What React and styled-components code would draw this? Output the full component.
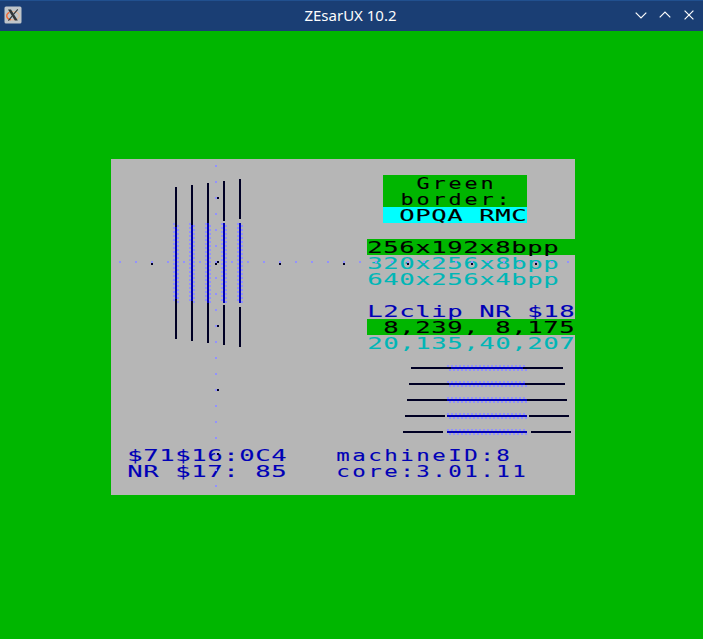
import React from "react";
import styled, { createGlobalStyle } from "styled-components";

const GlobalStyle = createGlobalStyle`
  html, body { margin: 0; padding: 0; background: #00b600; overflow: hidden; }
`;

const Window = styled.div`
  display: flex;
  flex-direction: column;
  width: 703px;
  height: 639px;
  background: #00b600;
`;

const TitleBar = styled.header`
  box-sizing: border-box;
  display: grid;
  grid-template-columns: 69px 1fr 71px;
  align-items: center;
  height: 31px;
  flex: none;
  background: #1a3e74;
  border-top: 1px solid #21508f;
`;

const AppIcon = styled.svg`
  display: block;
  margin: -2px 0 0 4px;
`;

const Title = styled.h1`
  margin: -2px 0 0;
  text-align: center;
  font: 400 15px/20px "Noto Sans", sans-serif;
  color: #fcfcfc;
`;

const Controls = styled.div`
  display: flex;
  justify-content: flex-end;
  gap: 8px;
  margin-top: -2px;
  padding-right: 6px;
`;

const ControlButton = styled.button`
  display: flex;
  padding: 0;
  border: 0;
  background: none;
`;

const Border = styled.main`
  flex: 1;
  padding: 128px 128px 0 111px;
`;

const Screen = styled.div`
  position: relative;
  display: grid;
  grid-template-columns: repeat(29, 16px);
  grid-template-rows: repeat(21, 16px);
  width: 464px;
  height: 336px;
  background: #b6b6b6;
`;

const Cells = styled.div`
  grid-column: ${(p) => p.$col + 1} / span ${(p) => p.$span};
  grid-row: ${(p) => p.$row + 1};
  height: 16px;
  background: ${(p) => p.$paper || "transparent"};
  color: ${(p) => p.$ink};
`;

/* Each glyph is stretched by $stretch, and spacing keeps the 16px character pitch. */
const Glyphs = styled.span`
  display: block;
  width: max-content;
  white-space: pre;
  font: 400 16px/16px "DejaVu Sans Mono", monospace;
  letter-spacing: ${(p) => 16 / p.$stretch - 9.633}px;
  text-indent: ${(p) => (16 / p.$stretch - 9.633) / 2}px;
  -webkit-text-stroke: 0.1px currentColor;
  transform: translateY(1px) scaleX(${(p) => p.$stretch});
  transform-origin: 0 0;
`;

const Plot = styled.svg`
  position: absolute;
  inset: 0;
`;

const GREEN = "#00b600";
const BLUE = "#0000b6";
const TEAL = "#00b6b6";
const NAVY = "#000024";
const LILAC = "#9292ff";

const LINES = [
  { row: 1, col: 17, span: 9, ink: "#000", paper: GREEN, text: "  Green", stretch: 1.36 },
  { row: 2, col: 17, span: 9, ink: "#000", paper: GREEN, text: " border:", stretch: 1.36 },
  { row: 3, col: 17, span: 9, ink: "#000", paper: "#00ffff", text: " OPQA RMC" },
  { row: 5, col: 16, span: 13, ink: "#000", paper: GREEN, text: "256x192x8bpp" },
  { row: 6, col: 16, span: 13, ink: TEAL, text: "320x256x8bpp" },
  { row: 7, col: 16, span: 13, ink: TEAL, text: "640x256x4bpp" },
  { row: 9, col: 16, span: 13, ink: BLUE, text: "L2clip NR $18" },
  { row: 10, col: 16, span: 13, ink: "#000", paper: GREEN, text: " 8,239, 8,175" },
  { row: 11, col: 16, span: 13, ink: TEAL, text: "20,135,40,207" },
  { row: 18, col: 1, span: 10, ink: BLUE, text: "$71$16:0C4" },
  { row: 18, col: 14, span: 12, ink: BLUE, text: "machineID:8", stretch: 1.4 },
  { row: 19, col: 1, span: 10, ink: BLUE, text: "NR $17: 85" },
  { row: 19, col: 14, span: 12, ink: BLUE, text: "core:3.01.11", stretch: 1.4 },
];

const range = (n) => Array.from({ length: n }, (_, i) => i);
const dot = (x, y) => `M${x} ${y}h2v2h-2z`;

const axisDots = [
  ...range(21).map((i) => dot(104, 6 + i * 16)),
  ...range(29).map((i) => dot(8 + i * 16, 102)),
].join("");

const markers = [
  [106, 38], [106, 166], [106, 230], [106, 294], [106, 102], [104, 104],
  [40, 104], [168, 104], [232, 104], [296, 104], [360, 104], [424, 104],
].map(([x, y]) => dot(x, y)).join("");

function VerticalBar({ i }) {
  const x = 64 + i * 16;
  return (
    <>
      <path fill={LILAC} d={range(20).map((k) => dot(x - 2, 64 + k * 4) + dot(x + 2, 66 + k * 4)).join("")} />
      <rect x={x} y="64" width="2" height="80" fill={BLUE} />
      <rect x={x} y={28 - i * 2} width="2" height="40" fill={NAVY} />
      <rect x={x} y={140 + i * 2} width="2" height="40" fill={NAVY} />
    </>
  );
}

function HorizontalBar({ i }) {
  const y = 208 + i * 16;
  return (
    <>
      <path fill={LILAC} d={range(20).map((k) => dot(336 + k * 4, y - 2) + dot(338 + k * 4, y + 2)).join("")} />
      <rect x="336" y={y} width="80" height="2" fill={BLUE} />
      <rect x={300 - i * 2} y={y} width="40" height="2" fill={NAVY} />
      <rect x={412 + i * 2} y={y} width="40" height="2" fill={NAVY} />
    </>
  );
}

function Control({ label, d }) {
  return (
    <ControlButton aria-label={label}>
      <svg width="16" height="16" viewBox="0 0 16 16" fill="none" stroke="#fcfcfc" strokeWidth="1.2">
        <path d={d} />
      </svg>
    </ControlButton>
  );
}

export default function App() {
  return (
    <>
      <GlobalStyle />
      <Window>
        <TitleBar>
          <AppIcon width="18" height="18" viewBox="0 0 18 18">
            <rect x="0.5" y="0.5" width="17" height="17" rx="1.5" fill="#bfc5ca" />
            <ellipse cx="9" cy="9.7" rx="6.3" ry="4.2" fill="none" stroke="#e2b79c" strokeWidth="1.2" />
            <path d="M5.3 6.3C2.6 7.6 2 10 3.5 12c.8 1 2 1.5 3.3 1.8" fill="none" stroke="#ed6b3c" strokeWidth="1.4" />
            <path d="M4 3.4h3L13.8 14.6h-3z" fill="#303438" />
            <path d="M13.8 3.4 9.7 8.2M8.1 10.2 4.4 14.6" stroke="#303438" strokeWidth="1.1" />
          </AppIcon>
          <Title>ZEsarUX 10.2</Title>
          <Controls>
            <Control label="Minimize" d="M2.7 5.7 8 11l5.3-5.3" />
            <Control label="Maximize" d="M2.7 10.3 8 5l5.3 5.3" />
            <Control label="Close" d="m3.6 3.6 8.8 8.8m0-8.8-8.8 8.8" />
          </Controls>
        </TitleBar>
        <Border>
          <Screen>
            {LINES.map((l) => (
              <Cells key={`${l.row}-${l.col}`} $row={l.row} $col={l.col} $span={l.span} $ink={l.ink} $paper={l.paper}>
                <Glyphs $stretch={l.stretch || 1.6}>{l.text}</Glyphs>
              </Cells>
            ))}
            <Plot width="464" height="336" viewBox="0 0 464 336" shapeRendering="crispEdges">
              <path d={axisDots} fill={LILAC} />
              <path d={markers} fill={NAVY} />
              {range(5).map((i) => <VerticalBar key={i} i={i} />)}
              {range(5).map((i) => <HorizontalBar key={i} i={i} />)}
            </Plot>
          </Screen>
        </Border>
      </Window>
    </>
  );
}
